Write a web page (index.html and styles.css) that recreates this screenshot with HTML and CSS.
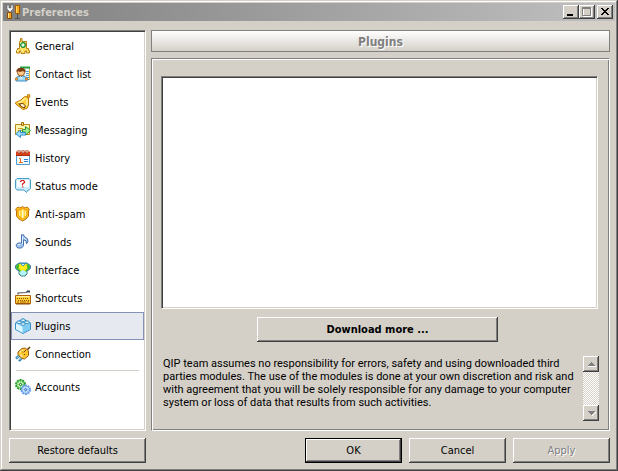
FILE: index.html
```html
<!DOCTYPE html>
<html lang="en">
<head>
<meta charset="utf-8">
<title>Preferences</title>
<link rel="stylesheet" href="styles.css">
</head>
<body>
<div class="window">
  <header class="titlebar">
    <svg class="app-icon" viewBox="0 0 16 16" aria-hidden="true">
      <path d="M1 1v4l2 2v1h2V7l2-2V1H5v3H3V1z" fill="#fff" stroke="#555" stroke-width=".6"/>
      <path d="M1.500 8.500h4v6h-4z" fill="#f7a51c" stroke="#8a4b00"/>
      <path d="M2.500 9v5" stroke="#ffe08a"/>
      <path d="M9.500 1.500h4v8h-4z" fill="#f9ab16" stroke="#a85a00"/>
      <path d="M10.500 2v7" stroke="#ffd867"/>
      <path d="M11.500 10v4M9 14.500h5" stroke="#555"/>
    </svg>
    <h1 class="title">Preferences</h1>
    <div class="caption-buttons">
      <button class="caption" aria-label="Minimize"><svg viewBox="0 0 12 10"><path d="M2 7h6v2H2z" fill="#000"/></svg></button>
      <button class="caption" aria-label="Maximize" disabled><svg viewBox="0 0 12 10"><path d="M2.500 1.500h8v8h-8z" fill="none" stroke="#fff"/><path d="M1.500 .5h8v8h-8zM1 1.500h9" fill="none" stroke="#808080"/></svg></button>
      <button class="caption close" aria-label="Close"><svg viewBox="0 0 12 10"><path d="M2 1h2v1h1v1h2V2h1V1h2v1H9v1H8v1H7v1h1v1h1v1h1v1H8V7H7V6H5v1H4v1H2V7h1V6h1V5h1V4H4V3H3V2H2z" fill="#000"/></svg></button>
    </div>
  </header>

  <div class="body">
    <nav class="sidebar" aria-label="Sections">
      <button class="item">
        <svg viewBox="0 0 16 16"><path d="M5.500 .5h1.500v3h4.500v7h2v2h1v2.500h-3v-2h-1.500v2.500h-4v-2.500H4.500v2h-3v-2.500h1v-2h2v-7h1z" fill="#ffdf5e" stroke="#b8800f"/><path d="M5.500 4v6M2.500 12v1.500M7 12v2" stroke="#fff7bd"/><circle cx="8" cy="7" r="2.300" fill="#e0ffe4" stroke="#148c34" stroke-width="1.300"/></svg>
        <span>General</span></button>
      <button class="item">
        <svg viewBox="0 0 16 16"><path d="M6.500 1.500h8v12h-8z" fill="#e9f7ff" stroke="#3e7fb5"/><path d="M5 .5h10v2H5z" fill="#23a03b"/><path d="M11 5.500h3M11 7.500h3M11 9.500h3M11 11.500h3" stroke="#4d9bd2"/><path d="M14.500 3v11" stroke="#e5b735"/><circle cx="6" cy="6.500" r="3.500" fill="#ffc98b" stroke="#a15a17"/><path d="M1.500 6.500V4l2-2h5l2 2v2.500L8 5 5 6 3 5z" fill="#7d3c13"/><path d="M1 15v-3l3-2 2 2 3-2 3 2v3z" fill="#9bdcff" stroke="#3d8ac4"/><path d="M5 11l1 2 2-2" fill="#fff"/><path d="M.5 12h2v2h-2zM10.500 12h2v2h-2z" fill="#ffad4d" stroke="#b8651b" stroke-width=".6"/></svg>
        <span>Contact list</span></button>
      <button class="item">
        <svg viewBox="0 0 16 16"><path d="M12.500 .7h2.200v2.600h-2.200zM11 2.500l2.500 1.500v7L12 14.500l-4 1L.7 10V8.500L6 6l3-3z" fill="#ffcf3d" stroke="#c17908"/><path d="M10.500 4L6 8 3 8.500M12 5v5l-2 3" stroke="#fff3a6" fill="none" stroke-width="1.300"/><path d="M3 9.500l5-.5 3 3-1.500 2.500L6 13z" fill="#7d4309"/><path d="M5.500 10h2.500l2 2L8.500 13.200 6 11.800z" fill="#fff2c2"/></svg>
        <span>Events</span></button>
      <button class="item">
        <svg viewBox="0 0 16 16"><path d="M.5 2.500h14v10H.5z" fill="#fff7ad" stroke="#b58913"/><path d="M3 6.500h5M3 8.500h4" stroke="#c99c22"/><path d="M6.500 .5h2v3h-2z" fill="#ffe35c" stroke="#a36d09"/><path d="M7.500 7.500h3v-3l5 4-5 4.500v-3h-3z" fill="#a6f08a" stroke="#259638"/><path d="M10.500 10.500h-5v-2.500L.6 11.800l4.900 3.700v-2.500h5z" fill="#9edcff" stroke="#338fc8"/></svg>
        <span>Messaging</span></button>
      <button class="item">
        <svg viewBox="0 0 16 16"><path d="M1.500 3.500h13v11h-13z" fill="#f3fbff" stroke="#4c9bd0"/><path d="M1 1.500h14V6H1z" fill="#d5431c"/><path d="M1 5.500h14" stroke="#a92b0b"/><path d="M3 0h2v3H3zM7 0h2v3H7zM11 0h2v3h-2z" fill="#ffe9df" stroke="#983210" stroke-width=".6"/><path d="M4 8.500h1.500v4M4 12.500h4" stroke="#ea6b13" fill="none"/><path d="M9 9.500h4M9 11.500h4" stroke="#347fd3"/></svg>
        <span>History</span></button>
      <button class="item">
        <svg viewBox="0 0 16 16"><path d="M2 .5h12l1.500 1.500v8.500L14 12h-1l-1.500 2.500L9 12H2L.5 10.500V2z" fill="#c9ecfc" stroke="#4b9bc7"/><path d="M2 2h12v7H2z" fill="#fbfeff"/><path d="M5.500 4V3.500l1-1h2l1 1v1L7.500 6v1.500M7 9h1.500" stroke="#d81b1b" stroke-width="1.200" fill="none"/></svg>
        <span>Status mode</span></button>
      <button class="item">
        <svg viewBox="0 0 16 16"><path d="M.6 3L3 1l2 1 2.500-1.400L10 2l2-1 2.400 2-.9 2v5l-2.500 3-3.500 2L4 13l-2.500-3V5z" fill="#ffc51f" stroke="#bc730b"/><path d="M2.500 3.500l2 .5 3-1.500 3 1.500 2-.5-.5 2V9l-4.500 4L3 9V5.500z" fill="#ffd63d" stroke="#f29a0a"/><path d="M7 4h1.500v8H7z" fill="#fffbd2"/><path d="M4.500 5v5M10.500 5v5" stroke="#ffef9b"/></svg>
        <span>Anti-spam</span></button>
      <button class="item">
        <svg viewBox="0 0 16 16"><path d="M6.500 .8h2l1 2 3 2 .5 3-1.500 2-.5-3-2.500-1v6L6.500 14H3L1.300 12.500v-2L3 9h3.500z" fill="#9dc2ed" stroke="#4470af"/><path d="M7.500 2v8M9 4l2.500 2M3 10.500h2" stroke="#e6f4ff" fill="none"/></svg>
        <span>Sounds</span></button>
      <button class="item">
        <svg viewBox="0 0 16 16"><path d="M.6 3.500L4 1h8l3.400 2.500v3L13 8.500h-1V12l-2 2H6l-2-2V8.500H3L.6 6.500z" fill="#67cf1f" stroke="#3878ac"/><path d="M1.500 4L4 2.500v4L3 7.500 1.500 6zM14.500 4L12 2.500v4l1 1L14.500 6z" fill="#2fb33b"/><path d="M4.500 2h7l1 4-3 3h-3l-3-3z" fill="#fbec19"/><path d="M5.500 1.500h5L8 4z" fill="#d9faff" stroke="#3b91c4"/><path d="M4.500 10L8 8l3.500 2v1.500l-2 2h-3l-2-2z" fill="#b5f3ff"/></svg>
        <span>Interface</span></button>
      <button class="item">
        <svg viewBox="0 0 16 16"><path d="M3 4.500V3l8-.5 1-1h3" stroke="#535761" fill="none" stroke-width="1.200"/><path d="M12 .5h3v2h-3z" fill="#3b4254"/><path d="M.5 5.500h15v8H.5z" fill="#ffcf35" stroke="#ad6206"/><path d="M1.500 6.500h13" stroke="#fff1a0"/><path d="M2 8.500h12M3 10.500h11" stroke="#8f500a" stroke-dasharray="1 1"/><path d="M2 12h2M5 12h6M12 12h2" stroke="#a85c08"/><path d="M1 14h14" stroke="#8e4b04"/></svg>
        <span>Shortcuts</span></button>
      <button class="item selected" aria-current="page">
        <svg viewBox="0 0 16 16"><path d="M8 1l7.400 4v6.500L8 15.400.6 11.500V5z" fill="#c3ecff" stroke="#2185c3"/><path d="M8 8.500l7-3.500v6.300L8 15z" fill="#7fcbf2"/><path d="M1 5l7 3.500V15L1 11.300z" fill="#dcf6ff"/><path d="M.8 5L8 8.500 15.200 5M8 8.500V15" fill="none" stroke="#7ac8ed" stroke-width=".8"/><g fill="#f1fcff" stroke="#2184bd" stroke-width=".9"><ellipse cx="8" cy="2.200" rx="2.300" ry="1.300"/><ellipse cx="4" cy="4.200" rx="2.300" ry="1.300"/><ellipse cx="12" cy="4.200" rx="2.300" ry="1.300"/><ellipse cx="8" cy="6" rx="2.300" ry="1.300"/></g></svg>
        <span>Plugins</span></button>
      <button class="item">
        <svg viewBox="0 0 16 16"><path d="M11.500 4.500l3.500-3.500" stroke="#69400b" stroke-width="1.600"/><path d="M1 12.500l4-3.500M4 15l3.500-4" stroke="#2b7caa" stroke-width="2.400"/><path d="M1.500 12L5 9M4.500 14L7 11" stroke="#a7e6ff"/><path d="M3 6l4-3.500 3.500-.5 3 3v4.500L9.500 13 7 12.500 3 8.500z" fill="#ffc530" stroke="#a25a08"/><path d="M4.500 6.500L8 4M5 8.500l2.500 2.500" stroke="#fff2a8" stroke-width="1.300"/><path d="M7 5.500l1 1M9 8l1 1M11 4l-2 2" stroke="#7d4407"/></svg>
        <span>Connection</span></button>
      <hr class="divider">
      <button class="item">
        <svg viewBox="0 0 16 16"><circle cx="5.500" cy="5.500" r="4.500" fill="#d6fbc9" stroke="#239b27" stroke-width="2" stroke-dasharray="2 .8"/><circle cx="5.500" cy="5.500" r="3.900" fill="none" stroke="#43b33d" stroke-width=".8"/><path d="M5.500 2v7M2 5.500h7M3 3l5 5M8 3L3 8" stroke="#62c158" stroke-width=".7"/><circle cx="5.500" cy="5.500" r="1" fill="#fff" stroke="#188522"/><circle cx="10.700" cy="10.700" r="4.300" fill="#d9eeff" stroke="#5b96e6" stroke-width="1.800" stroke-dasharray="2 .7"/><circle cx="10.700" cy="10.700" r="3.800" fill="none" stroke="#76aaf0" stroke-width=".8"/><path d="M10.700 7.500v6.400M7.500 10.700h6.400M8.500 8.500l4.500 4.500M13 8.500L8.500 13" stroke="#78b0ec" stroke-width=".7"/><circle cx="10.700" cy="10.700" r="1" fill="#fff" stroke="#3272cc"/></svg>
        <span>Accounts</span></button>
    </nav>

    <main class="content">
      <h2 class="heading">Plugins</h2>
      <section class="group" aria-label="Plugins">
        <div class="plugin-list" role="listbox" aria-label="Installed plugins" tabindex="0"></div>
        <button class="push download">Download more ...</button>
        <div class="notice">
          <p class="notice-text">QIP team assumes no responsibility for errors, safety and using downloaded third parties modules. The use of the modules is done at your own discretion and risk and with agreement that you will be solely responsible for any damage to your computer system or loss of data that results from such activities.</p>
          <div class="scrollbar">
            <button class="arrow" aria-label="Scroll up" disabled><svg viewBox="0 0 12 12"><path d="M3 8.500h8" fill="none" stroke="#fff"/><path d="M6 4h1v1h1v1h1v1h1v1H3V7h1V6h1V5h1z" fill="#808080"/></svg></button>
            <button class="arrow" aria-label="Scroll down" disabled><svg viewBox="0 0 12 12"><path d="M10 5h1v1h-1v1H9v1H8v1H7V8h1V7h1V6h1z" fill="#fff"/><path d="M3 4h7v1H9v1H8v1H7v1H6V7H5V6H4V5H3z" fill="#808080"/></svg></button>
          </div>
        </div>
      </section>
    </main>
  </div>

  <footer class="footer">
    <button class="push restore">Restore defaults</button>
    <div class="actions">
      <button class="push default">OK</button>
      <button class="push">Cancel</button>
      <button class="push" disabled>Apply</button>
    </div>
  </footer>
</div>
</body>
</html>
```
FILE: styles.css
```css
:root {
  --face: #d4d0c8;
  --light: #fff;
  --shadow: #808080;
  --dark: #404040;
}

* {
  box-sizing: border-box;
}

body {
  margin: 0;
  background: var(--face);
}

body,
button {
  font: 11px/13px "DejaVu Sans Condensed", "DejaVu Sans", sans-serif;
  color: #000;
}

button {
  margin: 0;
  padding: 0;
  border: 0;
  background: var(--face);
}

svg {
  display: block;
  flex: none;
}

.window {
  display: flex;
  flex-direction: column;
  min-height: 100vh;
  padding: 3px;
  box-shadow: inset -1px -1px var(--dark), inset 1px 1px var(--face),
    inset -2px -2px var(--shadow), inset 2px 2px var(--light);
}

.titlebar {
  display: flex;
  align-items: center;
  height: 18px;
  padding: 0 2px 0 3px;
  background: linear-gradient(to right, #808080, #c0c0c0);
}

.app-icon {
  width: 16px;
  height: 16px;
}

.title {
  flex: 1;
  margin: 0;
  font-size: 11px;
  font-weight: bold;
  color: var(--face);
}

.caption-buttons {
  display: flex;
}

.caption,
.arrow,
.push {
  box-shadow: inset -1px -1px var(--dark), inset 1px 1px var(--light),
    inset -2px -2px var(--shadow);
}

.caption {
  width: 16px;
  height: 14px;
  padding: 2px;
}

.caption svg {
  width: 12px;
  height: 10px;
}

.caption.close {
  margin-left: 2px;
}

.body {
  flex: 1;
  display: flex;
  gap: 5px;
  padding: 9px 5px 0 6px;
}

.sidebar,
.plugin-list {
  background: #fff;
  border: 1px solid;
  border-color: var(--shadow) var(--light) var(--light) var(--shadow);
  box-shadow: inset 1px 1px var(--dark), inset -1px -1px var(--face);
}

.sidebar {
  flex: none;
  width: 137px;
  padding: 1px;
}

.item {
  display: flex;
  align-items: center;
  gap: 4px;
  width: 100%;
  height: 28px;
  padding: 0 3px;
  border: 1px solid transparent;
  background: none;
  text-align: left;
}

.item svg {
  width: 16px;
  height: 16px;
}

.item.selected {
  border-color: #8592b5;
  background: #e6e9f0;
}

.divider {
  height: 1px;
  margin: 2px 5px;
  border: 0;
  background: var(--face);
}

.content {
  flex: 1;
  display: flex;
  flex-direction: column;
  gap: 6px;
}

.heading {
  margin: 0;
  padding: 4px 0 2px;
  border: 1px solid var(--shadow);
  background: linear-gradient(#fff, var(--face));
  font-size: 12px;
  line-height: 14px;
  text-align: center;
  color: var(--shadow);
  text-shadow: 1px 1px #fff;
}

.group {
  flex: 1;
  display: flex;
  flex-direction: column;
  gap: 8px;
  padding: 17px 10px 9px 9px;
  border: 1px solid;
  border-color: var(--shadow) var(--light) var(--light) var(--shadow);
  box-shadow: inset 1px 1px var(--light), inset -1px -1px var(--shadow);
}

.plugin-list {
  flex: 1;
  margin-right: 1px;
}

.push {
  height: 25px;
  padding: 0 16px;
}

.download {
  align-self: center;
  width: 241px;
  margin-right: 5px;
  font-weight: bold;
}

.notice {
  display: flex;
  height: 65px;
  margin-top: 6px;
}

.notice-text {
  flex: 1;
  margin: 0;
  padding: 1px 8px 0 2px;
  font-family: Roboto, sans-serif;
}

.scrollbar {
  display: flex;
  flex-direction: column;
  justify-content: space-between;
  width: 16px;
  background: repeating-conic-gradient(#fff 0 25%, var(--face) 0 50%) 0 0 / 2px 2px;
}

.arrow {
  width: 16px;
  height: 16px;
  padding: 2px;
}

.arrow svg {
  width: 12px;
  height: 12px;
}

.footer {
  display: flex;
  justify-content: space-between;
  padding: 7px 5px 5px 6px;
}

.restore {
  width: 137px;
}

.actions {
  display: flex;
  gap: 7px;
}

.actions .push {
  width: 97px;
}

.actions .default {
  border: 1px solid #000;
}

.push:disabled {
  color: var(--shadow);
  text-shadow: 1px 1px #fff;
}
```
